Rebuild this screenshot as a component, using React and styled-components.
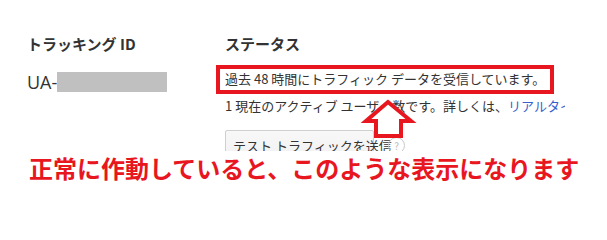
import React from 'react'
import styled, { createGlobalStyle } from 'styled-components'

const GlobalStyle = createGlobalStyle`
  body {
    margin: 0;
    background: #fff;
    font-family: "Noto Sans CJK JP", "Noto Sans", sans-serif;
  }
`

const Page = styled.div`
  position: relative;
  width: 607px;
  height: 206px;
  overflow: hidden;
  background: #fff;
`

const Panel = styled.div`
  display: flex;
  height: 151px;
  overflow: hidden;
  padding: 34px 0 0 27px;
  box-sizing: border-box;
`

const Column = styled.div`
  width: ${props => props.width}px;
  padding-left: ${props => props.inset || 0}px;
  box-sizing: border-box;
  overflow: hidden;
  white-space: nowrap;
  flex-shrink: 0;
`

const Heading = styled.h3`
  margin: 0;
  font-size: 15px;
  line-height: 20px;
  font-weight: 700;
  color: #333;
`

const TrackingId = styled.div`
  display: flex;
  align-items: center;
  margin-top: 17px;
  font-family: "Open Sans", "Noto Sans", sans-serif;
  font-size: 18px;
  line-height: 22px;
  color: #333;
`

const Masked = styled.span`
  display: inline-block;
  width: 110px;
  height: 20px;
  background: #c0c0c0;
`

const Message = styled.div`
  position: relative;
  display: inline-block;
  margin-top: 14px;
  font-size: 13px;
  line-height: 22px;
  color: #333;

  &::after {
    content: '';
    position: absolute;
    top: -3px;
    bottom: -4px;
    left: -9px;
    right: -9px;
    border: 4px solid #e8161f;
  }
`

const Info = styled.div`
  margin-top: 5px;
  font-size: 13px;
  line-height: 22px;
  color: #333;
`

const InfoLink = styled.a`
  color: #3a5fcd;
  text-decoration: none;
`

const Actions = styled.div`
  display: flex;
  align-items: center;
  margin-top: 13px;
`

const Button = styled.button`
  height: 30px;
  width: 149px;
  padding: 0 7px;
  text-align: left;
  font-family: inherit;
  font-size: 13px;
  color: #333;
  background: linear-gradient(#f8f8f8, #f1f1f1);
  border: 1px solid #cfcfcf;
  border-radius: 2px;
`

const Help = styled.span`
  display: inline-flex;
  align-items: center;
  justify-content: center;
  width: 15px;
  height: 15px;
  margin-left: 14px;
  border: 1px solid #c8c8c8;
  border-radius: 50%;
  font-size: 10px;
  color: #bbb;
`

const Caption = styled.div`
  padding: 5px 0 0 29px;
  font-size: 24px;
  line-height: 24px;
  font-weight: 700;
  color: #e8161f;
  white-space: nowrap;
`

const Arrow = styled.svg`
  position: absolute;
  left: 0;
  top: 0;
  pointer-events: none;
`

export default function App() {
  return (
    <Page>
      <GlobalStyle />
      <Panel>
        <Column width={189}>
          <Heading>トラッキング ID</Heading>
          <TrackingId>
            UA-<Masked />
          </TrackingId>
        </Column>
        <Column width={349} inset={9}>
          <Heading>ステータス</Heading>
          <Message>過去 48 時間にトラフィック データを受信しています。</Message>
          <Info>
            1 現在のアクティブ ユーザー数です。詳しくは、
            <InfoLink href="#">リアルタイム レポート</InfoLink>
          </Info>
          <Actions>
            <Button>テスト トラフィックを送信</Button>
            <Help>?</Help>
          </Actions>
        </Column>
      </Panel>
      <Caption>正常に作動していると、このような表示になります</Caption>
      <Arrow width="607" height="206">
        <polygon
          points="388,102 366,121 376,121 376,136 401,136 401,121 411,121"
          fill="#fff"
          stroke="#e8161f"
          strokeWidth="4"
          strokeLinejoin="miter"
        />
      </Arrow>
    </Page>
  )
}
